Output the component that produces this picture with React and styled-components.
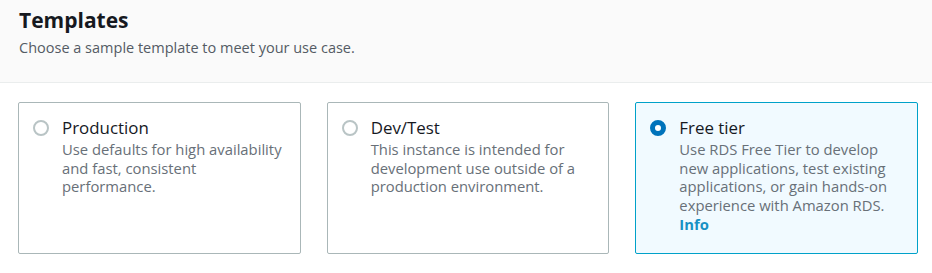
import React from "react";
import styled, { createGlobalStyle } from "styled-components";

const Global = createGlobalStyle`
  html, body { margin: 0; padding: 0; background: #ffffff; }
  body { font-family: "Open Sans", "Noto Sans", Arial, sans-serif; }
`;

const Page = styled.div`
  width: 932px;
  height: 273px;
  background: #ffffff;
  overflow: hidden;
`;

const Header = styled.header`
  box-sizing: border-box;
  height: 83px;
  padding: 5px 19px 0;
  background: #fafafa;
  border-bottom: 1px solid #eaeded;
`;

const Title = styled.h2`
  margin: 0;
  font-size: 21px;
  line-height: 30px;
  font-weight: 700;
  color: #16191f;
`;

const Subtitle = styled.p`
  margin: 3px 0 0;
  font-size: 14.5px;
  line-height: 20px;
  color: #545b64;
`;

const Cards = styled.div`
  display: grid;
  grid-template-columns: repeat(3, 1fr);
  gap: 26px;
  padding: 19px 14px 0 18px;
`;

const Card = styled.label`
  box-sizing: border-box;
  height: 152px;
  display: flex;
  gap: 13px;
  padding: 12px 13px 0 14px;
  border: 1px solid ${(p) => (p.$selected ? "#00a1c9" : "#aab7b8")};
  border-radius: 2px;
  background: ${(p) => (p.$selected ? "#f1faff" : "#ffffff")};
  cursor: pointer;
`;

const Radio = styled.span`
  flex: none;
  box-sizing: border-box;
  width: 16px;
  height: 16px;
  margin-top: 5px;
  border-radius: 50%;
  border: ${(p) => (p.$checked ? "5px solid #0073bb" : "2px solid #b9c4c5")};
  background: #ffffff;
`;

const Body = styled.div`
  display: flex;
  flex-direction: column;
`;

const Name = styled.div`
  font-size: 16.9px;
  line-height: 25px;
  color: #16191f;
`;

const Desc = styled.div`
  font-size: 14.8px;
  line-height: 18.7px;
  color: #687078;
`;

const InfoLink = styled.a`
  font-size: 14.8px;
  line-height: 18.7px;
  font-weight: 700;
  color: #1791c4;
  text-decoration: none;
`;

const templates = [
  {
    name: "Production",
    desc: "Use defaults for high availability and fast, consistent performance.",
  },
  {
    name: "Dev/Test",
    desc: "This instance is intended for development use outside of a production environment.",
  },
  {
    name: "Free tier",
    desc: "Use RDS Free Tier to develop new applications, test existing applications, or gain hands-on experience with Amazon RDS.",
    info: true,
    selected: true,
  },
];

export default function App() {
  return (
    <Page>
      <Global />
      <Header>
        <Title>Templates</Title>
        <Subtitle>Choose a sample template to meet your use case.</Subtitle>
      </Header>
      <Cards>
        {templates.map((t) => (
          <Card key={t.name} $selected={t.selected}>
            <Radio $checked={t.selected} />
            <Body>
              <Name>{t.name}</Name>
              <Desc>{t.desc}</Desc>
              {t.info && <InfoLink href="#">Info</InfoLink>}
            </Body>
          </Card>
        ))}
      </Cards>
    </Page>
  );
}
